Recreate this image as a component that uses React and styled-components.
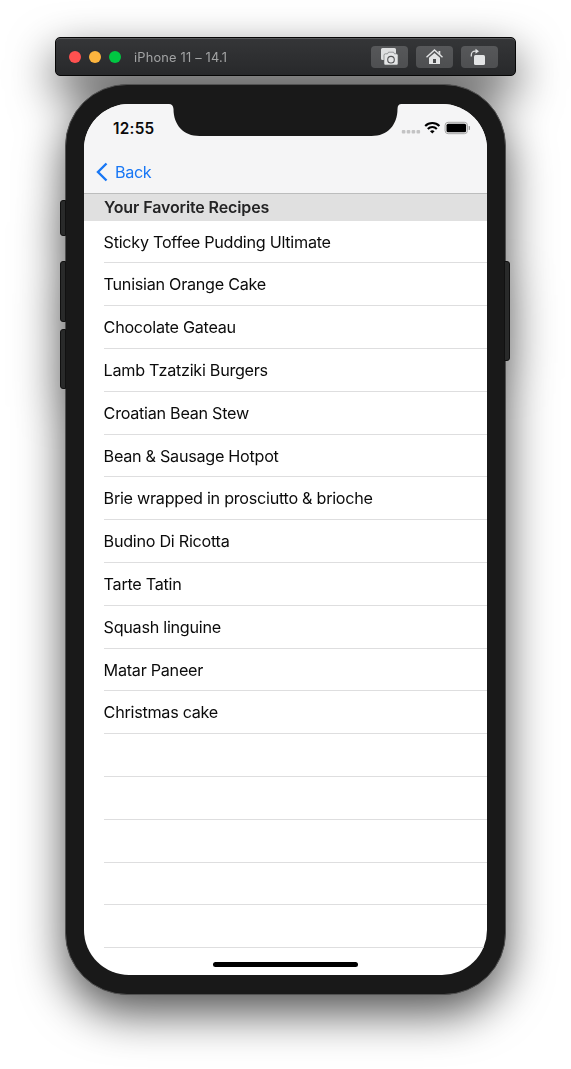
import React from 'react';
import styled, { createGlobalStyle } from 'styled-components';

const GlobalStyle = createGlobalStyle`
  body { margin: 0; background: #fff; font-family: Inter, "Liberation Sans", sans-serif; }
  * { box-sizing: border-box; }
`;

const Stage = styled.main`
  height: 1069px;
  width: 571px;
  padding-top: 37px;
  overflow: hidden;
`;

const Simulator = styled.div`
  display: flex;
  flex-direction: column;
  align-items: center;
  gap: 8px;
  filter: drop-shadow(0 18px 23px rgba(0, 0, 0, 0.68));
`;

const TitleBar = styled.header`
  width: 461px;
  height: 39px;
  display: flex;
  align-items: center;
  padding: 0 17px 0 13px;
  border: 1px solid #060606;
  border-radius: 5px;
  background: linear-gradient(#353638, #28292b);
  box-shadow: inset 0 1px 0 #58595b;
`;

const Lights = styled.div`
  display: flex;
  gap: 8px;
`;

const Light = styled.span`
  width: 12px;
  height: 12px;
  border-radius: 50%;
  background: ${(p) => p.$color};
`;

const WindowTitle = styled.h1`
  margin: 1px auto 0 13px;
  font-size: 12.8px;
  font-weight: 400;
  letter-spacing: 0.2px;
  color: #a3a4a5;
`;

const Tools = styled.div`
  display: flex;
  gap: 8px;
`;

const ToolButton = styled.button`
  width: 37px;
  height: 22px;
  padding: 0;
  border: 0;
  border-radius: 4px;
  background: linear-gradient(#57585a, #4e4f51);
  svg { display: block; }
`;

const Phone = styled.div`
  position: relative;
  width: 441px;
  height: 911px;
  padding: 19px 18px;
  border: 1px solid #515151;
  border-radius: 62px;
  background: #191919;
`;

const SideKey = styled.span`
  position: absolute;
  ${(p) => p.$side}: ${(p) => (p.$side === 'left' ? '-6px' : '-5px')};
  top: ${(p) => p.$top}px;
  width: 6px;
  height: ${(p) => p.$height}px;
  border: 1px solid #111;
  border-radius: ${(p) => (p.$side === 'left' ? '3px 0 0 3px' : '0 3px 3px 0')};
  background: #292a2a;
`;

const Screen = styled.section`
  position: relative;
  width: 403px;
  height: 871px;
  overflow: hidden;
  border-radius: 45px;
  background: #fff;
  color: #0b0b0b;
`;

const Notch = styled.svg`
  position: absolute;
  top: 0;
  left: 83px;
`;

const TopChrome = styled.div`
  height: 90px;
  background: #f5f5f6;
  border-bottom: 1px solid #bcbdbd;
`;

const StatusBar = styled.div`
  height: 48px;
  display: flex;
  align-items: center;
  justify-content: space-between;
  padding: 0 17px 0 29px;
`;

const Clock = styled.time`
  font-size: 15.3px;
  font-weight: 600;
  letter-spacing: 0.25px;
`;

const BackButton = styled.button`
  display: flex;
  align-items: center;
  gap: 7px;
  height: 40px;
  padding: 0 0 0 12px;
  border: 0;
  background: none;
  font: 400 16.2px Inter, sans-serif;
  letter-spacing: -0.4px;
  color: #1877f5;
`;

const SectionTitle = styled.h2`
  margin: 0;
  height: 26.6px;
  padding-left: 20px;
  line-height: 27px;
  background: #e0e0e0;
  font-size: 16px;
  font-weight: 600;
  letter-spacing: -0.12px;
  color: #242425;
`;

const RecipeList = styled.ul`
  margin: 0;
  padding: 0 0 0 19.6px;
  list-style: none;
`;

const RecipeRow = styled.li`
  height: 42.8px;
  border-bottom: 1px solid #dededf;
  line-height: 43px;
  font-size: 16.2px;
  font-weight: 420;
  letter-spacing: -0.28px;
`;

const HomeIndicator = styled.span`
  position: absolute;
  left: 129px;
  bottom: 8px;
  width: 145px;
  height: 5px;
  border-radius: 3px;
  background: #000;
`;

const recipes = [
  'Sticky Toffee Pudding Ultimate',
  'Tunisian Orange Cake',
  'Chocolate Gateau',
  'Lamb Tzatziki Burgers',
  'Croatian Bean Stew',
  'Bean & Sausage Hotpot',
  'Brie wrapped in prosciutto & brioche',
  'Budino Di Ricotta',
  'Tarte Tatin',
  'Squash linguine',
  'Matar Paneer',
  'Christmas cake',
  '', '', '', '', '',
];

const CameraIcon = () => (
  <svg width="37" height="22" viewBox="0 0 37 22">
    <path d="M11.500 2H23.500A1.500 1.500 0 0 1 25 3.500V9H13v5h-1.500a1.500 1.500 0 0 1-1.500-1.500v-9A1.500 1.500 0 0 1 11.500 2z" fill="#dedfe0" />
    <path d="M14.500 7.800h2l1-1.600h5l1 1.600h2A1.500 1.500 0 0 1 27 9.300v8.200a1.500 1.500 0 0 1-1.500 1.500h-11a1.500 1.500 0 0 1-1.500-1.500V9.300a1.500 1.500 0 0 1 1.500-1.500z" fill="#e4e5e6" stroke="#636466" strokeWidth=".6" />
    <circle cx="20" cy="13.700" r="3.300" fill="none" stroke="#535456" strokeWidth="1.100" />
  </svg>
);

const HomeIcon = () => (
  <svg width="37" height="22" viewBox="0 0 37 22">
    <path d="M10.500 11.300 18.500 4l8 7.300" fill="none" stroke="#e3e4e5" strokeWidth="1.400" />
    <path d="M22.500 5h1.800v4l-1.800-1.600z" fill="#e3e4e5" />
    <path d="M13 11.800 18.500 6.900 24 11.800V18H13z" fill="#e3e4e5" />
    <path d="M17 13h3v4h-3z" fill="#4c4d4f" />
  </svg>
);

const RotateIcon = () => (
  <svg width="37" height="22" viewBox="0 0 37 22">
    <rect x="13" y="9" width="11" height="10" rx="1.500" fill="#e3e4e5" />
    <path d="M10.300 10.500V9a3.800 3.800 0 0 1 3.800-3.800h1.500" fill="none" stroke="#dcddde" strokeWidth="1.300" />
    <path d="m14.500 2.700 3.500 2.500-3.500 2.500z" fill="#e3e4e5" />
  </svg>
);

const StatusIcons = () => (
  <svg width="70" height="16" viewBox="0 0 70 16">
    <g fill="#c3c3c4">
      <rect x="1.800" y="10" width="3.600" height="3.600" rx="1" /><rect x="6.700" y="10" width="3.600" height="3.600" rx="1" />
      <rect x="11.600" y="10" width="3.600" height="3.600" rx="1" /><rect x="16.500" y="10" width="3.600" height="3.600" rx="1" />
    </g>
    <g fill="none" stroke="#000" strokeWidth="2.100">
      <path d="M25.200 5.900a10 10 0 0 1 14.200 0M27.800 8.900a6.400 6.400 0 0 1 9 0" />
    </g>
    <path d="m32.300 13.500-2.300-2.300a3.400 3.400 0 0 1 4.600 0z" />
    <rect x="45.100" y="2.300" width="22.300" height="11.400" rx="3" fill="none" stroke="#a5a5a5" />
    <rect x="46.500" y="3.700" width="19.600" height="8.600" rx="1.500" />
    <path d="M69 6v4q1-.5 1-2t-1-2" fill="#999" stroke="#999" strokeWidth=".6" />
  </svg>
);

export default function App() {
  return (
    <>
      <GlobalStyle />
      <Stage>
        <Simulator>
          <TitleBar>
            <Lights>
              <Light $color="#ff5150" />
              <Light $color="#fdb53e" />
              <Light $color="#00c742" />
            </Lights>
            <WindowTitle>iPhone 11 – 14.1</WindowTitle>
            <Tools>
              <ToolButton aria-label="Screenshot"><CameraIcon /></ToolButton>
              <ToolButton aria-label="Home"><HomeIcon /></ToolButton>
              <ToolButton aria-label="Rotate"><RotateIcon /></ToolButton>
            </Tools>
          </TitleBar>
          <Phone>
            <SideKey $side="left" $top={115} $height={36} />
            <SideKey $side="left" $top={176} $height={61} />
            <SideKey $side="left" $top={244} $height={60} />
            <SideKey $side="right" $top={176} $height={100} />
            <Screen>
              <TopChrome>
                <StatusBar>
                  <Clock>12:55</Clock>
                  <StatusIcons />
                </StatusBar>
                <BackButton>
                  <svg width="12" height="20" viewBox="0 0 12 20" fill="none" stroke="#1877f5" strokeWidth="2.400">
                    <path d="M10.500 1.500 2 10l8.500 8.500" />
                  </svg>
                  Back
                </BackButton>
              </TopChrome>
              <SectionTitle>Your Favorite Recipes</SectionTitle>
              <RecipeList>
                {recipes.map((name, i) => <RecipeRow key={i}>{name}</RecipeRow>)}
              </RecipeList>
              <Notch width="237" height="32" viewBox="0 0 237 32">
                <path d="M0 0h2q4 0 4.500 5c0 16 10 27 26 27h172c16 0 26-11 26-27q0-5 4-5h2.500z" fill="#191919" />
              </Notch>
              <HomeIndicator />
            </Screen>
          </Phone>
        </Simulator>
      </Stage>
    </>
  );
}
